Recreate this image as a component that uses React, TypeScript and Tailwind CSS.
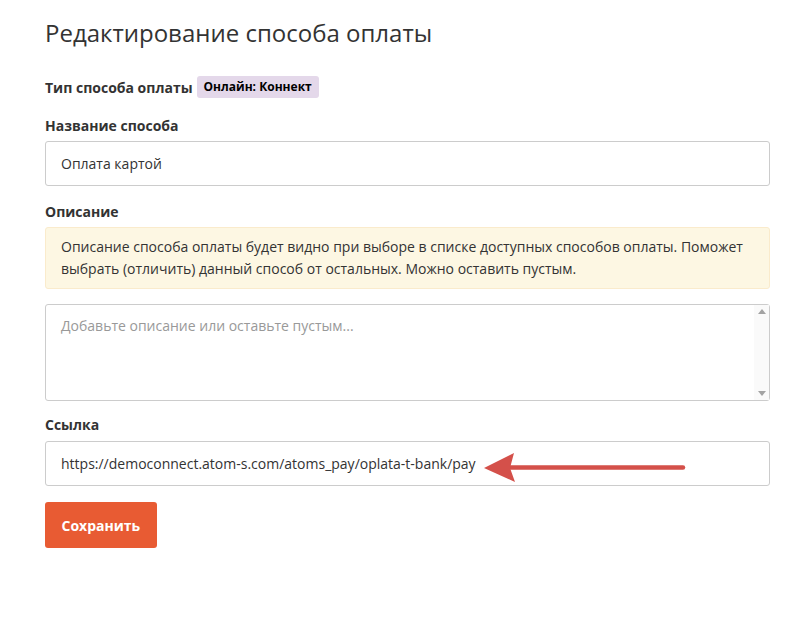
import React from "react";

export default function App() {
  return (
    <div className="min-h-[620px] w-[811px] bg-white text-[#333]" style={{ fontFamily: '"Open Sans", sans-serif' }}>
      <div className="ml-[45px] w-[725px] pt-[17px]">
        <h1 className="text-[24px] leading-[32px] font-normal text-[#333]">Редактирование способа оплаты</h1>
        <div className="mt-[27px] flex items-center gap-[4px]">
          <span className="text-[14px] font-bold">Тип способа оплаты</span>
          <span className="rounded-[3px] bg-[#e4d8ea] px-[7px] py-[3px] text-[12px] font-bold leading-[16px] text-black">Онлайн: Коннект</span>
        </div>
        <div className="mt-[18px] text-[14px] font-bold leading-[20px]">Название способа</div>
        <div className="mt-[5px] flex h-[45px] items-center rounded-[3px] border border-[#ccc] px-[15px] text-[14px]">Оплата картой</div>
        <div className="mt-[16px] text-[14px] font-bold leading-[20px]">Описание</div>
        <div className="mt-[5px] rounded-[3px] border border-[#faebcc] bg-[#fdf7e3] px-[15px] py-[8px] text-[14px] leading-[22px]">
          Описание способа оплаты будет видно при выборе в списке доступных способов оплаты. Поможет выбрать (отличить) данный способ от остальных. Можно оставить пустым.
        </div>
        <div className="relative mt-[15px] h-[97px] rounded-[3px] border border-[#ccc]">
          <div className="px-[15px] pt-[10px] text-[14px] text-[#999]">Добавьте описание или оставьте пустым...</div>
          <div className="absolute right-0 top-0 bottom-0 flex w-[15px] flex-col items-center justify-between bg-[#fafafa] py-[4px]">
            <svg width="8" height="5" viewBox="0 0 8 5"><polygon points="4,0 8,5 0,5" fill="#a3a3a3" /></svg>
            <svg width="8" height="5" viewBox="0 0 8 5"><polygon points="0,0 8,0 4,5" fill="#a3a3a3" /></svg>
          </div>
        </div>
        <div className="mt-[14px] text-[14px] font-bold leading-[20px]">Ссылка</div>
        <div className="relative mt-[6px] flex h-[45px] items-center rounded-[3px] border border-[#ccc] px-[15px] text-[14px]">
          https://democonnect.atom-s.com/atoms_pay/oplata-t-bank/pay
          <svg className="absolute left-[438px] top-[11px]" width="202" height="30" viewBox="0 0 202 30">
            <line x1="22" y1="14.5" x2="199" y2="14.5" stroke="#d4504a" strokeWidth="4.5" strokeLinecap="round" />
            <polygon points="0,15 30,0 26,15 31,29" fill="#d4504a" />
          </svg>
        </div>
        <button className="mt-[16px] h-[46px] rounded-[3px] bg-[#e85b33] px-[16.5px] text-[14px] font-bold text-white">Сохранить</button>
      </div>
    </div>
  );
}
